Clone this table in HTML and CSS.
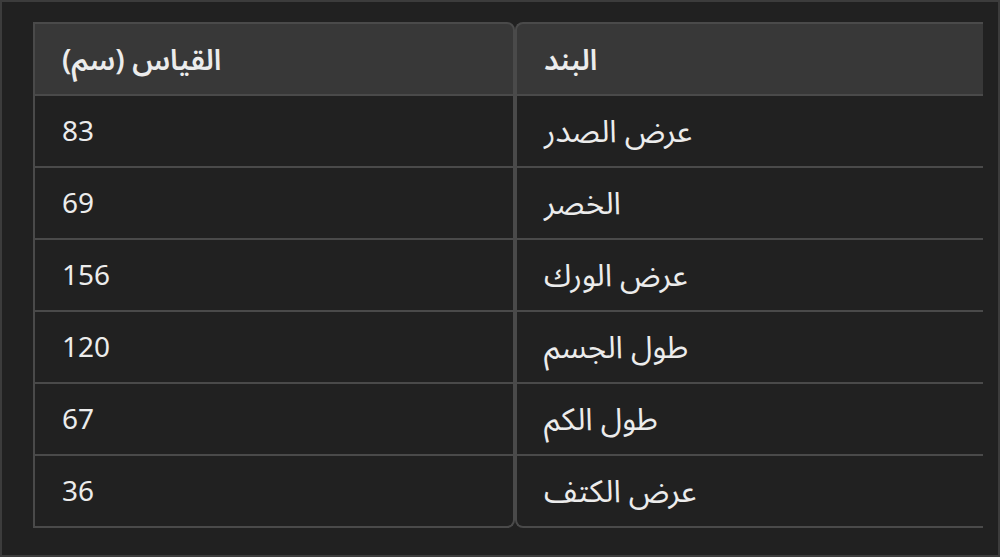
FILE: index.html
```html
<!DOCTYPE html>
<html lang="ar">
<head>
<meta charset="utf-8">
<title>جدول القياسات</title>
<link rel="stylesheet" href="styles.css">
</head>
<body>
<div class="frame">
  <table class="sizes" dir="rtl">
    <thead>
      <tr>
        <th class="col-item">البند</th>
        <th class="col-value">القياس (سم)</th>
      </tr>
    </thead>
    <tbody>
      <tr><td class="col-item">عرض الصدر</td><td class="col-value">83</td></tr>
      <tr><td class="col-item">الخصر</td><td class="col-value">69</td></tr>
      <tr><td class="col-item">عرض الورك</td><td class="col-value">156</td></tr>
      <tr><td class="col-item">طول الجسم</td><td class="col-value">120</td></tr>
      <tr><td class="col-item">طول الكم</td><td class="col-value">67</td></tr>
      <tr><td class="col-item">عرض الكتف</td><td class="col-value">36</td></tr>
    </tbody>
  </table>
</div>
</body>
</html>
```

FILE: styles.css
```css
html, body {
  margin: 0;
  padding: 0;
  background: #212121;
}

.frame {
  box-sizing: border-box;
  width: 1000px;
  height: 557px;
  border: 2px solid #3c3c3c;
  background: #212121;
  padding: 20px 0 0 31px;
}

.sizes {
  border-collapse: separate;
  border-spacing: 0;
  font-family: "Noto Sans", "Noto Sans Arabic", "DejaVu Sans", sans-serif;
  font-size: 28px;
  color: #ececec;
}

.sizes th,
.sizes td {
  height: 70px;
  padding: 0 27px;
  text-align: left;
  vertical-align: middle;
  border-bottom: 2px solid #4a4a4a;
  box-sizing: content-box;
  line-height: 1.2;
}

.sizes th {
  background: #383838;
  font-weight: 600;
  font-size: 29px;
  border-top: 2px solid #4a4a4a;
}

.sizes td.col-item {
  font-size: 31px;
}

.sizes .col-item {
  width: 412px;
  border-left: 2px solid #4a4a4a;
}

.sizes .col-value {
  width: 424px;
  border-left: 2px solid #4a4a4a;
  border-right: 2px solid #4a4a4a;
}

.sizes thead .col-item { border-top-left-radius: 8px; }
.sizes thead .col-value { border-top-right-radius: 8px; }
.sizes tbody tr:last-child .col-item { border-bottom-left-radius: 8px; }
.sizes tbody tr:last-child .col-value { border-bottom-right-radius: 8px; }
```
